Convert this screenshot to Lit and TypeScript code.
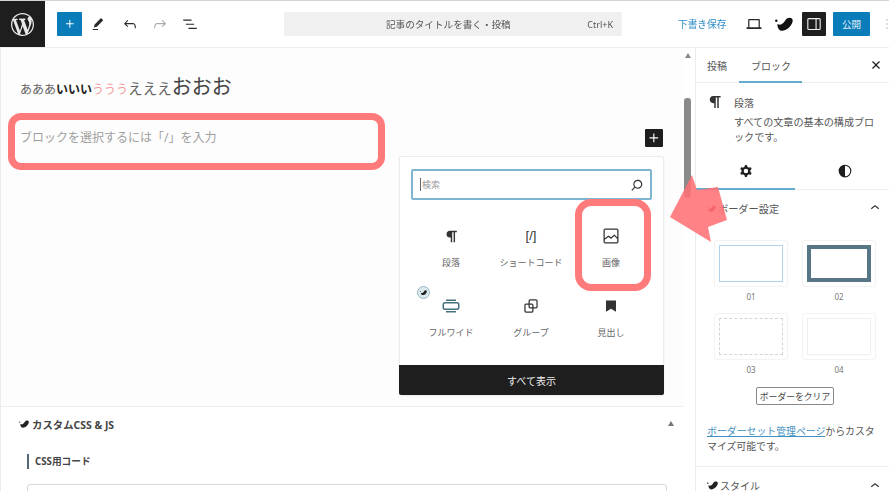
import { LitElement, html, css, svg } from "lit";
import { customElement } from "lit/decorators.js";

const ic = (d: string, size = 24, cls = "") =>
  html`<svg class=${cls} width=${size} height=${size} viewBox="0 0 24 24" fill="currentColor"><path fill-rule="evenodd" d=${d}></path></svg>`;

const P = {
  plus: "M11 12.5V17.5H12.5V12.5H17.5V11H12.5V6H11V11H6V12.5H11Z",
  pen: "m19 7-3-3-8.5 8.5-1 4 4-1L19 7Zm-7 11.5H5V20h7v-1.5Z",
  undo: "M18.3 11.7c-.6-.6-1.4-.9-2.3-.9H6.7l2.9-3.3-1.1-1-4.5 5L8.5 16l1-1-2.7-2.7H16c.5 0 .9.2 1.3.5 1 1 1 3.4 1 4.5v.3h1.5v-.2c0-1.5 0-4.3-1.5-5.7z",
  redo: "M15.6 6.5l-1.1 1 2.9 3.3H8c-.9 0-1.7.3-2.3.9-1.4 1.5-1.4 4.2-1.4 5.6v.2h1.5v-.3c0-1.1 0-3.5 1-4.5.3-.3.7-.5 1.3-.5h9.2L14.5 15l1.1 1.1 4.6-4.6-4.6-5z",
  list: "M3 6h11v1.5H3V6Zm3.5 5.5h11V13h-11v-1.5ZM21 17H10v1.5h11V17Z",
  search: "M13 5c-3.3 0-6 2.7-6 6 0 1.4.5 2.7 1.3 3.7l-3.8 3.8 1.1 1.1 3.8-3.8c1 .8 2.3 1.3 3.7 1.3 3.3 0 6-2.7 6-6S16.3 5 13 5zm0 10.5c-2.5 0-4.5-2-4.5-4.5s2-4.5 4.5-4.5 4.5 2 4.5 4.5-2 4.5-4.5 4.5z",
  close: "M12 13.06l3.712 3.713 1.061-1.06L13.061 12l3.712-3.712-1.06-1.06L12 10.938 8.288 7.227l-1.061 1.06L10.939 12l-3.712 3.712 1.06 1.061L12 13.061z",
  para: "M9.5 13.5H11V20h2V6h2v14h2V6h2.5V4H9.5C7 4 5 6 5 8.75S7 13.5 9.5 13.5z",
  cog: "M10.289 4.836A1 1 0 0 1 11.275 4h1.306a1 1 0 0 1 .987.836l.244 1.466c.787.26 1.503.679 2.108 1.218l1.393-.522a1 1 0 0 1 1.216.437l.653 1.13a1 1 0 0 1-.23 1.273l-1.148.944a6.025 6.025 0 0 1 0 2.435l1.149.946a1 1 0 0 1 .23 1.272l-.653 1.13a1 1 0 0 1-1.216.437l-1.394-.522c-.605.54-1.32.958-2.108 1.218l-.244 1.466a1 1 0 0 1-.987.836h-1.306a1 1 0 0 1-.986-.836l-.244-1.466a5.995 5.995 0 0 1-2.108-1.218l-1.394.522a1 1 0 0 1-1.217-.436l-.653-1.131a1 1 0 0 1 .23-1.272l1.149-.946a6.026 6.026 0 0 1 0-2.435l-1.148-.944a1 1 0 0 1-.23-1.272l.653-1.131a1 1 0 0 1 1.217-.437l1.393.522a5.994 5.994 0 0 1 2.108-1.218l.244-1.466ZM14.929 12a3 3 0 1 1-6 0 3 3 0 0 1 6 0Z",
  half: "M12 3.5a8.5 8.5 0 1 0 0 17 8.5 8.5 0 0 0 0-17ZM12 5v14a7 7 0 0 0 0-14Z",
  laptop: "M6 6h12a1 1 0 0 1 1 1v9h2v2H3v-2h2V7a1 1 0 0 1 1-1Zm.5 1.5V16h11V7.5h-11Z",
  panel: "M5 4h14a2 2 0 0 1 2 2v12a2 2 0 0 1-2 2H5a2 2 0 0 1-2-2V6a2 2 0 0 1 2-2Zm0 1.5a.5.5 0 0 0-.5.5v12c0 .3.2.5.5.5h9v-13H5Zm10.5 0v13H19c.3 0 .5-.2.5-.5V6c0-.3-.2-.5-.5-.5h-3.5Z",
  image: "M19 3H5a2 2 0 0 0-2 2v14a2 2 0 0 0 2 2h14a2 2 0 0 0 2-2V5a2 2 0 0 0-2-2ZM5 4.5h14c.3 0 .5.2.5.5v8.4l-3-2.9a.8.8 0 0 0-1 0L12 13.5l-2.5-1.9a.8.8 0 0 0-1 0l-4 3.1V5c0-.3.2-.5.5-.5Zm14 15H5a.5.5 0 0 1-.5-.5v-2.4l4.5-3.4 3 2.3 4-3.4 3.5 3.4V19c0 .3-.2.5-.5.5Z",
  group: "M18 4h-7a2 2 0 0 0-2 2v3H6a2 2 0 0 0-2 2v7c0 1.1.9 2 2 2h7a2 2 0 0 0 2-2v-3h3a2 2 0 0 0 2-2V6a2 2 0 0 0-2-2Zm-4.5 14c0 .3-.2.5-.5.5H6a.5.5 0 0 1-.5-.5v-7c0-.3.2-.5.5-.5h3V13c0 1.1.9 2 2 2h2.500v3Zm0-4.500H11a.5.5 0 0 1-.5-.5v-2.500H13c.3 0 .5.2.5.5v2.500Zm5-.5c0 .3-.2.5-.5.5h-3V11a2 2 0 0 0-2-2h-2.500V6c0-.3.2-.5.5-.5h7c.3 0 .5.2.5.5v7Z",
  bookmark: "M6 5.500h12V19l-6-3.800L6 19V5.500Z",
  wide: "M6 8h12a2.500 2.500 0 0 1 2.500 2.500v3A2.500 2.500 0 0 1 18 16H6a2.500 2.500 0 0 1-2.500-2.500v-3A2.500 2.500 0 0 1 6 8Zm0 1.500a1 1 0 0 0-1 1v3a1 1 0 0 0 1 1h12a1 1 0 0 0 1-1v-3a1 1 0 0 0-1-1H6ZM7 5.500h10V7H7V5.500Zm0 11.500h10v1.500H7V17Z",
  chevUp: "M6.500 12.400 12 8l5.500 4.400-1 1.200L12 10l-4.500 3.600-1-1.200Z",
};

const WP =
  "M20 10c0-5.51-4.49-10-10-10C4.48 0 0 4.49 0 10c0 5.52 4.48 10 10 10 5.51 0 10-4.48 10-10zM7.78 15.37L4.37 6.22c.55-.02 1.17-.08 1.17-.08.5-.06.44-1.13-.06-1.11 0 0-1.45.11-2.37.11-.18 0-.37 0-.58-.01C4.12 2.69 6.87 1.11 10 1.11c2.33 0 4.45.87 6.05 2.34-.68-.11-1.65.39-1.65 1.58 0 .74.45 1.36.9 2.1.35.61.55 1.36.55 2.46 0 1.49-1.4 5-1.4 5l-3.03-8.37c.54-.02.82-.17.82-.17.5-.05.44-1.25-.06-1.22 0 0-1.44.12-2.38.12-.87 0-2.33-.12-2.33-.12-.5-.03-.56 1.2-.06 1.22l.92.08 1.26 3.41zM17.41 10c.24-.64.74-1.87.43-4.25.7 1.29 1.05 2.71 1.05 4.25 0 3.29-1.73 6.24-4.4 7.78.97-2.59 1.94-5.2 2.92-7.78zM6.1 18.09C3.12 16.65 1.11 13.53 1.11 10c0-1.3.23-2.48.72-3.59C3.25 10.3 4.67 14.2 6.1 18.09zm4.03-6.63l2.58 6.98c-.86.29-1.76.45-2.71.45-.79 0-1.57-.11-2.29-.33.81-2.38 1.62-4.74 2.42-7.1z";

const blob = (w: number, cls = "") =>
  html`<svg class=${cls} width=${w} height=${(w * 14) / 18} viewBox="0 0 18 14" fill="currentColor"><path d="M2.500 7C6 9 8.500 6.500 10.500 3 12.500 0 17 0 17.700 3 18 8 12 13.800 7 13.800 4 13.800 2 10 2.500 7Z"></path><circle cx="1.300" cy="3.800" r="1.200"></circle></svg>`;

const blocks = [
  { label: "段落", icon: P.para },
  { label: "ショートコード", text: "[/]" },
  { label: "画像", icon: P.image },
  { label: "フルワイド", icon: P.wide, wide: true },
  { label: "グループ", icon: P.group },
  { label: "見出し", icon: P.bookmark },
];

@customElement("app-root")
export class AppRoot extends LitElement {
  static styles = css`
    :host {
      display: block;
      width: 889px;
      height: 491px;
      overflow: hidden;
      background: #fff;
      color: #333;
      font-family: "Noto Sans", "Noto Sans CJK JP", sans-serif;
      font-size: 11px;
    }
    * { box-sizing: border-box; }
    svg { display: block; flex: none; }
    .page { position: relative; width: 889px; height: 491px; display: flex; flex-direction: column; filter: blur(0.5px); overflow: hidden; }

    /* top bar */
    .bar { flex: none; height: 48px; display: flex; align-items: center; border-top: 1px solid #d4d4d4; border-bottom: 1px solid #eeeeee; }
    .bar > * { flex: none; }
    .logo { width: 45px; height: 46px; background: #1e1e1e; color: #e8e8e8; display: flex; align-items: center; justify-content: center; }
    .add { width: 25px; height: 24px; margin-left: 12px; background: #0a7cba; color: #fff; display: flex; align-items: center; justify-content: center; border-radius: 1px; }
    .tool { width: 24px; height: 24px; padding: 3px; color: #2a2a2a; }
    .tool.pen { margin-left: 4px; }
    .tool.undo { margin-left: 8px; }
    .tool.redo { margin-left: 6px; color: #aaa; }
    .tool.list { margin-left: 6px; }
    .cmd { width: 338px; height: 24px; margin-left: 82px; background: #f0f0f0; border-radius: 2px; display: flex; align-items: center; font-size: 9.600px; color: #555; padding-left: 102px; white-space: nowrap; }
    .cmd .key { margin-left: auto; margin-right: 9px; font-size: 9px; color: #555; }
    .save { margin-left: 56px; font-size: 9.700px; color: #2e8cc4; white-space: nowrap; width: 48px; }
    .view { margin-left: 16px; width: 24px; height: 24px; padding: 2px; color: #2a2a2a; }
    .swell { margin-left: 9px; color: #111; width: 18px; }
    .toggle { margin-left: 9px; width: 24px; height: 24px; background: #1e1e1e; color: #eee; border-radius: 1px; display: flex; align-items: center; justify-content: center; }
    .pub { margin-left: 7px; width: 37px; height: 24px; background: #0a7cba; color: #e8f4fb; font-size: 9.500px; border-radius: 1px; display: flex; align-items: center; justify-content: center; }
    .dots { margin-left: 16px; width: 2px; height: 10px; background: repeating-linear-gradient(#ddd 0 2px, transparent 2px 4px); }

    .cols { flex: 1; display: flex; min-height: 0; }

    /* main column */
    .main { position: relative; width: 695px; flex: none; display: flex; flex-direction: column; border-left: 1px solid #ececec; }
    .scroll { position: absolute; top: 0; right: 0; bottom: 0; width: 11px; background: #fff; }
    .scroll .up { position: absolute; top: 5px; left: 1px; width: 0; height: 0; border: 3.500px solid transparent; border-top: 0; border-bottom: 5px solid #888; }
    .scroll .thumb { position: absolute; top: 50px; left: 0; width: 7px; height: 100px; background: #8a8a8a; border-radius: 3px; }
    .editor { height: 359px; flex: none; padding: 27px 0 0 19px; background: #fdfdfd; border-bottom: 1px solid #eeeeee; }
    .title { display: flex; align-items: baseline; height: 24px; white-space: nowrap; font-size: 12px; color: #666; line-height: 24px; }
    .title b { font-weight: 700; color: #222; }
    .title .u { color: #ef9c9c; }
    .title .e { font-size: 14.600px; color: #666; }
    .title .o { font-size: 20px; color: #444; }
    .ph { margin-top: 29px; font-size: 12px; color: #a0a0a0; line-height: 20px; white-space: nowrap; }
    .meta { flex: 1; padding: 8px 0 0 26px; background: #fff; }
    .meta h3 { position: relative; margin: 0 0 0 -8px; display: flex; align-items: center; gap: 3px; font-size: 10.400px; font-weight: 700; color: #444; height: 18px; }
    .meta h3 svg { color: #222; }
    .tri { position: absolute; right: 21px; top: 6px; width: 0; height: 0; border: 3.500px solid transparent; border-top: 0; border-bottom: 5px solid #777; }
    .sub { margin-top: 21px; border-left: 2px solid #567; padding-left: 6px; height: 15px; line-height: 15px; font-size: 9.700px; font-weight: 700; color: #444; }
    .code { margin-top: 15px; width: 640px; height: 30px; border: 1px solid #d8d8d8; border-radius: 3px; }

    /* inserter */
    .plusbtn { position: absolute; left: 644px; top: 81px; width: 18px; height: 18px; background: #1e1e1e; color: #fff; border-radius: 1px; display: flex; align-items: center; justify-content: center; }
    .pop { position: absolute; left: 398px; top: 108px; width: 265px; height: 239px; background: #fff; border: 1px solid #ececec; border-radius: 2px; display: flex; flex-direction: column; padding: 12px 0 0; box-shadow: 0 1px 2px rgba(0,0,0,.08); }
    .search { margin: 0 11px; height: 31px; border: 2px solid #7fb5d0; border-radius: 2px; display: flex; align-items: center; padding: 0 4px 0 7px; font-size: 9px; color: #999; }
    .search svg { margin-left: auto; color: #333; }
    .search i { width: 1px; height: 13px; background: #666; margin-right: 1px; }
    .grid { margin: 16px 11px 0; display: grid; grid-template-columns: repeat(3, 80px); grid-auto-rows: 70px; flex: 1; }
    .cell { position: relative; display: flex; flex-direction: column; align-items: center; color: #333; }
    .cell .gl { height: 24px; margin-top: 8px; display: flex; align-items: center; justify-content: center; font-family: "Liberation Sans", sans-serif; font-size: 13px; font-weight: 400; line-height: 24px; }
    .cell .lb { margin-top: 9px; font-size: 9px; color: #666; line-height: 12px; white-space: nowrap; }
    .cell .gl.wide { color: #45707f; }
    .badge { position: absolute; left: 6px; top: 0; width: 13px; height: 13px; border-radius: 50%; background: #dbe9ee; border: 1px solid #9ab6c2; display: flex; align-items: center; justify-content: center; color: #222; }
    .all { height: 30px; flex: none; background: #1e1e1e; color: #f0f0f0; font-size: 10px; display: flex; align-items: center; justify-content: center; border-radius: 0 0 2px 2px; margin: 0 -1px -1px; }

    /* sidebar */
    .side { flex: 1; min-width: 0; border-left: 1px solid #ececec; background: #fff; display: flex; flex-direction: column; overflow: hidden; }
    .side > * { flex: none; }
    .tabs { position: relative; height: 35px; display: flex; align-items: center; padding-left: 11px; border-bottom: 1px solid #eeeeee; font-size: 10px; color: #555; white-space: nowrap; }
    .tabs span:nth-child(2) { margin-left: 24px; font-size: 10px; }
    .tabs .x { margin-left: auto; margin-right: 3px; color: #222; }
    .tabs .line { position: absolute; left: 43px; bottom: -1px; width: 63px; height: 2px; background: #63acd0; }
    .info { display: flex; padding: 10px 0 0 11px; height: 70px; }
    .info svg { color: #333; margin-left: -1px; }
    .info div { margin-left: 10px; flex: none; width: 150px; font-size: 10px; line-height: 15px; color: #555; padding-top: 3px; }
    .info p { margin: 4px 0 0; font-size: 10.100px; }
    .stabs { width: 198px; height: 37px; display: flex; border-bottom: 1px solid #eeeeee; }
    .stabs span { flex: 1; display: flex; align-items: center; justify-content: center; color: #1e1e1e; }
    .stabs span:first-child { border-bottom: 2px solid #63acd0; margin-bottom: -1px; }
    .head { display: flex; align-items: center; height: 36px; padding: 0 5px 0 11px; font-size: 10.200px; color: #555; gap: 2px; white-space: nowrap; }
    .head svg:first-child { color: #a22; }
    .head .chev { margin-left: auto; color: #333; }
    .tiles { display: grid; grid-template-columns: 74px 74px; column-gap: 14px; padding: 14px 0 0 18px; }
    .tile { height: 47px; border: 1px solid #f3f3f3; border-radius: 3px; padding: 4px; display: flex; }
    .tile i { flex: 1; display: block; }
    .t1 i { border: 1.500px solid #b5d2e8; }
    .t2 i { border: 4px solid #577686; }
    .t3 i { border: 1.500px dashed #d4d4d4; }
    .t4 i { border: 1px solid #eee; }
    .cap { height: 26px; text-align: center; font-size: 8px; color: #777; line-height: 20px; }
    .clear { margin: 1px 0 0 60px; width: 78px; height: 18px; border: 1.500px solid #888; border-radius: 2px; font-size: 8.800px; color: #444; display: flex; align-items: center; justify-content: center; white-space: nowrap; }
    .note { margin: 19px 0 0 11px; width: 172px; height: 42px; font-size: 9.900px; line-height: 15px; color: #555; }
    .note a { color: #3f8fc0; text-decoration: underline; }
    .foot { border-top: 1px solid #eeeeee; }
    .foot .head { color: #555; height: 37px; font-size: 10px; }
    .foot .head svg:first-child { color: #222; }

    /* annotations */
    .mark { position: absolute; border: 7px solid #ff7b7b; border-radius: 13px; pointer-events: none; }
    .m1 { left: 8px; top: 113px; width: 377px; height: 57px; }
    .m2 { left: 575px; top: 199px; width: 76px; height: 92px; border-width: 7.500px; border-radius: 16px; }
    .arrow { position: absolute; left: 665px; top: 170px; }
  `;

  render() {
    return html`<div class="page">
      <header class="bar">
        <div class="logo"><svg width="23" height="23" viewBox="0 0 20 20" fill="currentColor"><path d=${WP}></path></svg></div>
        <div class="add">${ic(P.plus, 16)}</div>
        ${ic(P.pen, 24, "tool pen")}
        ${ic(P.undo, 24, "tool undo")}
        ${ic(P.redo, 24, "tool redo")}
        ${ic(P.list, 24, "tool list")}
        <div class="cmd">記事のタイトルを書く・投稿<span class="key">Ctrl+K</span></div>
        <div class="save">下書き保存</div>
        ${ic(P.laptop, 24, "view")}
        ${blob(18, "swell")}
        <div class="toggle">${ic(P.panel, 18)}</div>
        <div class="pub">公開</div>
        <div class="dots"></div>
      </header>

      <div class="cols">
        <main class="main">
          <section class="editor">
            <div class="title"><span>あああ</span><b>いいい</b><span class="u">ううう</span><span class="e">えええ</span><span class="o">おおお</span></div>
            <div class="ph">ブロックを選択するには「/」を入力</div>
          </section>
          <section class="meta">
            <h3>${blob(10)}<span>カスタムCSS &amp; JS</span><i class="tri"></i></h3>
            <div class="sub">CSS用コード</div>
            <div class="code"></div>
          </section>
          <div class="scroll"><i class="up"></i><i class="thumb"></i></div>
          <div class="plusbtn">${ic(P.plus, 18)}</div>
          <div class="pop">
            <div class="search"><i></i>検索${ic(P.search, 18)}</div>
            <div class="grid">
              ${blocks.map(
                (b) => html`<div class="cell">
                  ${b.wide ? html`<span class="badge">${blob(7)}</span>` : ""}
                  <div class="gl ${b.wide ? "wide" : ""}">${b.icon ? ic(b.icon, b.wide ? 24 : b.icon === P.para ? 17 : 20) : b.text}</div>
                  <div class="lb">${b.label}</div>
                </div>`
              )}
            </div>
            <div class="all">すべて表示</div>
          </div>
        </main>

        <aside class="side">
          <div class="tabs"><span>投稿</span><span>ブロック</span>${ic(P.close, 20, "x")}<i class="line"></i></div>
          <div class="info">${ic(P.para, 18)}<div>段落<p>すべての文章の基本の構成ブロックです。</p></div></div>
          <div class="stabs"><span>${ic(P.cog, 18)}</span><span>${ic(P.half, 18)}</span></div>
          <div class="head">${blob(9)}<span>ボーダー設定</span>${ic(P.chevUp, 18, "chev")}</div>
          <div class="tiles">
            <div class="tile t1"><i></i></div><div class="tile t2"><i></i></div>
            <div class="cap">01</div><div class="cap">02</div>
            <div class="tile t3"><i></i></div><div class="tile t4"><i></i></div>
            <div class="cap">03</div><div class="cap">04</div>
          </div>
          <div class="clear">ボーダーをクリア</div>
          <div class="note"><a>ボーダーセット管理ページ</a>からカスタマイズ可能です。</div>
          <div class="foot"><div class="head">${blob(11)}<span>スタイル</span>${ic(P.chevUp, 18, "chev")}</div></div>
        </aside>
      </div>

      <div class="mark m1"></div>
      <div class="mark m2"></div>
      <svg class="arrow" width="66" height="76" viewBox="0 0 66 76">
        ${svg`<polygon points="27,5 5,47 46,72 43,57 62,50 53,17 32,20" fill="#ff7175" fill-opacity="0.88"></polygon>`}
      </svg>
    </div>`;
  }
}
